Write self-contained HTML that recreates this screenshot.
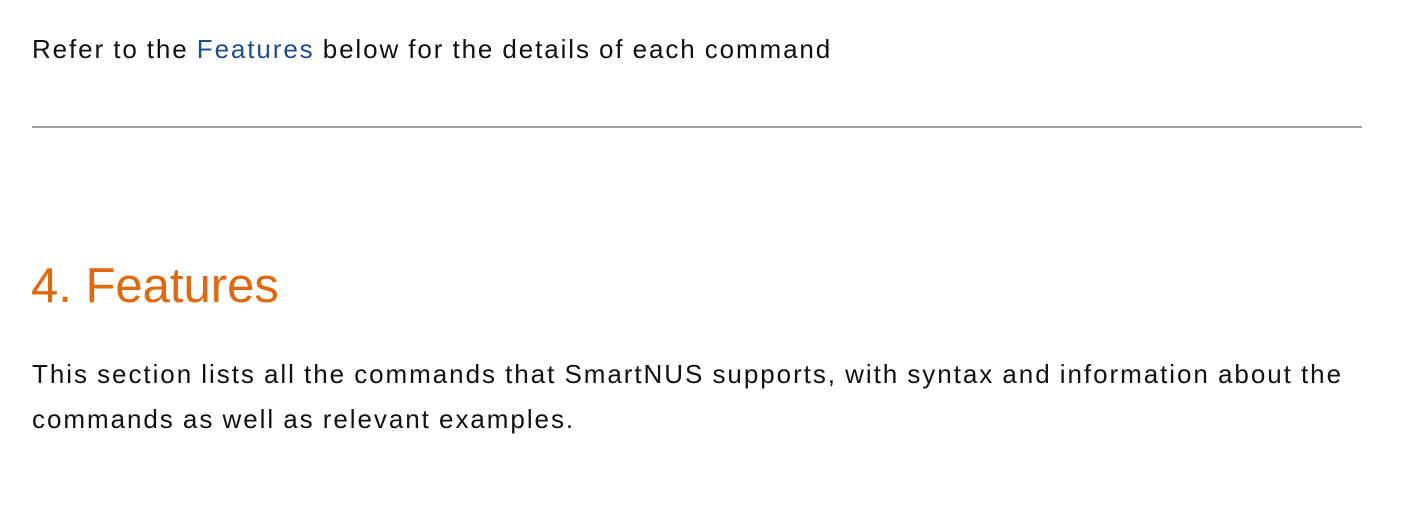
<!DOCTYPE html>
<html><head><meta charset="utf-8"><style>
html,body{margin:0;padding:0;background:#fff;width:1422px;height:522px;overflow:hidden}
body{font-family:"Liberation Sans",sans-serif;color:#111;}
.p1{position:absolute;left:32px;top:31px;font-size:26px;line-height:36px;white-space:nowrap;letter-spacing:1.9px;word-spacing:-1px}
a{color:#1f4e8c;text-decoration:none}
hr{position:absolute;left:32px;top:126px;width:1330px;margin:0;border:0;border-top:2px solid #a0a0a0}
h2{position:absolute;left:31px;top:255px;margin:0;font-weight:normal;font-size:49px;line-height:62px;color:#e0690f}
.p2{position:absolute;left:32px;top:352px;font-size:26px;line-height:45px;margin:0;letter-spacing:1.95px;word-spacing:-1px;white-space:nowrap}
</style></head><body>
<div class="p1">Refer to the <a>Features</a> below for the details of each command</div>
<hr>
<h2>4. Features</h2>
<p class="p2">This section lists all the commands that SmartNUS supports, with syntax and information about the<br>commands as well as relevant examples.</p>
</body></html>
